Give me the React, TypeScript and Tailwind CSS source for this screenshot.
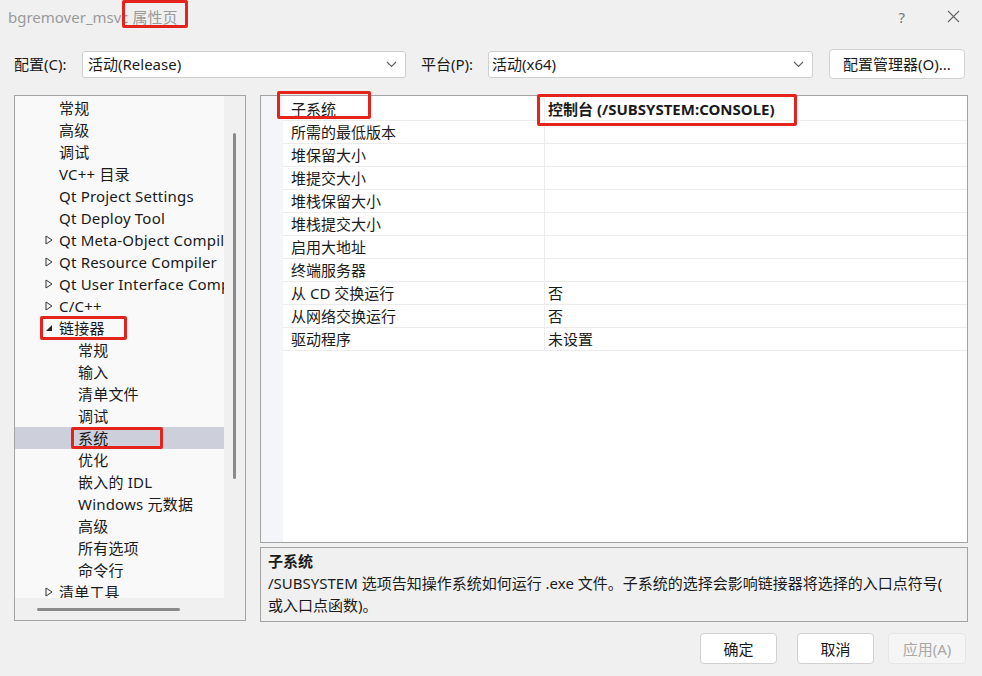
import React from "react";

const Chevron = () => (
  <svg width="11" height="7" viewBox="0 0 11 7" className="shrink-0">
    <polyline points="1,1 5.5,5.5 10,1" fill="none" stroke="#606060" strokeWidth="1.1" />
  </svg>
);

const TriOpen = () => (
  <svg width="8" height="10" viewBox="0 0 8 10">
    <polygon points="1,1 7,5 1,9" fill="none" stroke="#333" strokeWidth="1" />
  </svg>
);

const TriFilled = () => (
  <svg width="8" height="8" viewBox="0 0 8 8">
    <polygon points="7,1 7,7 1,7" fill="#222" />
  </svg>
);

type TreeItem = { label: string; level: 1 | 2; tri?: "open" | "filled"; selected?: boolean };

const tree: TreeItem[] = [
  { label: "常规", level: 1 },
  { label: "高级", level: 1 },
  { label: "调试", level: 1 },
  { label: "VC++ 目录", level: 1 },
  { label: "Qt Project Settings", level: 1 },
  { label: "Qt Deploy Tool", level: 1 },
  { label: "Qt Meta-Object Compiler", level: 1, tri: "open" },
  { label: "Qt Resource Compiler", level: 1, tri: "open" },
  { label: "Qt User Interface Compiler", level: 1, tri: "open" },
  { label: "C/C++", level: 1, tri: "open" },
  { label: "链接器", level: 1, tri: "filled" },
  { label: "常规", level: 2 },
  { label: "输入", level: 2 },
  { label: "清单文件", level: 2 },
  { label: "调试", level: 2 },
  { label: "系统", level: 2, selected: true },
  { label: "优化", level: 2 },
  { label: "嵌入的 IDL", level: 2 },
  { label: "Windows 元数据", level: 2 },
  { label: "高级", level: 2 },
  { label: "所有选项", level: 2 },
  { label: "命令行", level: 2 },
  { label: "清单工具", level: 1, tri: "open" },
];

const props: [string, string, boolean?][] = [
  ["子系统", "控制台 (/SUBSYSTEM:CONSOLE)", true],
  ["所需的最低版本", ""],
  ["堆保留大小", ""],
  ["堆提交大小", ""],
  ["堆栈保留大小", ""],
  ["堆栈提交大小", ""],
  ["启用大地址", ""],
  ["终端服务器", ""],
  ["从 CD 交换运行", "否"],
  ["从网络交换运行", "否"],
  ["驱动程序", "未设置"],
];

const RedBox = ({ cls }: { cls: string }) => (
  <div className={`absolute border-[3px] border-[#e3231c] rounded-[2px] pointer-events-none ${cls}`} />
);

export default function App() {
  return (
    <div className="relative w-[982px] h-[676px] overflow-hidden bg-[#f0f0f0] text-[#1a1a1a] font-['Noto_Sans','Noto_Sans_CJK_SC',sans-serif] text-[15px] leading-[22px]">
      {/* title bar */}
      <div className="flex h-[33px] items-center pl-[8px] pr-[22px]">
        <span className="text-[#9a9a9a] text-[15px]">bgremover_msvc 属性页</span>
        <div className="flex-1" />
        <span className="text-[#777] text-[15px] mr-[42px]">?</span>
        <svg width="13" height="13" viewBox="0 0 13 13">
          <path d="M1 1 L12 12 M12 1 L1 12" stroke="#666" strokeWidth="1.1" />
        </svg>
      </div>

      {/* config row */}
      <div className="mt-[16px] flex h-[30px] items-center pl-[14px]">
        <span className="w-[68px]">配置(C):</span>
        <div className="flex h-[27px] w-[324px] items-center justify-between rounded-[3px] border border-[#cfcfcf] bg-white pl-[5px] pr-[8px]">
          <span>活动(Release)</span>
          <Chevron />
        </div>
        <span className="ml-[15px] w-[67px]">平台(P):</span>
        <div className="flex h-[27px] w-[325px] items-center justify-between rounded-[3px] border border-[#cfcfcf] bg-white pl-[3px] pr-[8px]">
          <span>活动(x64)</span>
          <Chevron />
        </div>
        <div className="ml-[16px] flex h-[30px] w-[136px] items-center justify-center rounded-[4px] border border-[#d2d2d2] bg-white">
          配置管理器(O)...
        </div>
      </div>

      {/* main area */}
      <div className="mt-[16px] flex h-[527px] pl-[14px]">
        {/* left tree */}
        <div className="flex h-[526px] w-[232px] flex-col border border-[#a3a3a3] bg-[#f0f0f0]">
          <div className="flex h-[502px]">
            <div className="w-[209px] overflow-hidden bg-[#f9f9f9] pt-[1px]">
              {tree.map((t, i) => (
                <div
                  key={i}
                  className={`flex h-[22px] items-center whitespace-nowrap ${t.selected ? "bg-[#cdd0da]" : ""}`}
                >
                  <div className="flex w-[44px] shrink-0 justify-end pr-[6px]">
                    {t.tri === "open" && <TriOpen />}
                    {t.tri === "filled" && <TriFilled />}
                  </div>
                  <span className={`tracking-[0.2px] ${t.level === 2 ? "pl-[19px]" : ""}`}>{t.label}</span>
                </div>
              ))}
            </div>
            <div className="flex w-[21px] justify-center pt-[37px]">
              <div className="h-[346px] w-[3px] rounded-full bg-[#8a8a8a]" />
            </div>
          </div>
          <div className="flex h-[22px] items-center pl-[22px]">
            <div className="h-[3px] w-[143px] rounded-full bg-[#8a8a8a]" />
          </div>
        </div>

        {/* right side */}
        <div className="ml-[14px] flex w-[708px] flex-col">
          <div className="flex h-[448px] border border-[#a3a3a3] bg-white">
            <div className="w-[22px] bg-[#f3f5f9]" />
            <div className="flex-1 pt-[2px]">
              {props.map(([name, val, bold], i) => (
                <div key={i} className="flex h-[23px] border-b border-[#ececec]">
                  <div className="w-[262px] border-r border-[#ececec] pl-[8px] leading-[23px]">{name}</div>
                  <div className={`flex-1 pl-[3px] leading-[23px] ${bold ? "font-bold" : ""}`}>{val}</div>
                </div>
              ))}
            </div>
          </div>
          <div className="mt-[4px] h-[75px] border border-[#a3a3a3] bg-[#f0f0f0] px-[7px] pt-[2px] text-[15px]">
            <div className="font-bold leading-[22px]">子系统</div>
            <div className="leading-[22px] whitespace-nowrap">
              /SUBSYSTEM 选项告知操作系统如何运行 .exe 文件。子系统的选择会影响链接器将选择的入口点符号(
              <br />
              或入口点函数)。
            </div>
          </div>
        </div>
      </div>

      {/* buttons */}
      <div className="mt-[11px] flex justify-end gap-[20px] pr-[16px]">
        <div className="flex h-[31px] w-[77px] items-center justify-center rounded-[4px] border border-[#d0d0d0] bg-white">
          确定
        </div>
        <div className="flex h-[31px] w-[77px] items-center justify-center rounded-[4px] border border-[#d0d0d0] bg-white">
          取消
        </div>
        <div className="-ml-[6px] flex h-[31px] w-[78px] items-center justify-center rounded-[4px] border border-[#e6e6e6] bg-[#f5f5f5] text-[#a8a8a8]">
          应用(A)
        </div>
      </div>

      {/* annotations */}
      <RedBox cls="left-[122px] top-[0px] w-[66px] h-[28px]" />
      <RedBox cls="left-[277px] top-[91px] w-[94px] h-[28px]" />
      <RedBox cls="left-[537px] top-[94px] w-[260px] h-[32px]" />
      <RedBox cls="left-[40px] top-[316px] w-[87px] h-[24px]" />
      <RedBox cls="left-[71px] top-[427px] w-[92px] h-[22px]" />
    </div>
  );
}
